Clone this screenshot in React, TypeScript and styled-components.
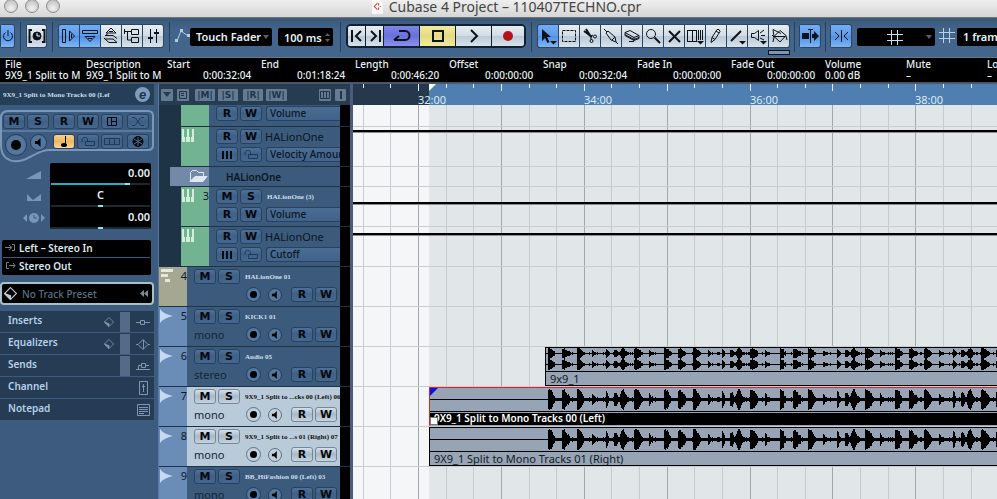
import React from "react";
import styled, { createGlobalStyle, css } from "styled-components";

const UI = `"Noto Sans", "Open Sans", sans-serif`;

const GlobalStyle = createGlobalStyle`
  * { box-sizing: border-box; }
  html, body { margin: 0; padding: 0; }
  body { font-family: ${UI}; font-size: 11px; line-height: 14px; background: #3c5b7d; overflow: hidden; }
  button, input, select { font: inherit; color: inherit; margin: 0; padding: 0; border: 0; background: none; border-radius: 0; }
  select { appearance: none; }
  svg { display: block; flex: none; }
  h1, h2, dl, dt, dd, ul { margin: 0; padding: 0; font: inherit; list-style: none; }
`;

const Window = styled.div`
  display: flex;
  flex-direction: column;
  height: 100vh;
  overflow: hidden;
`;

/* ---------- title bar ---------- */

const TitleBar = styled.header`
  position: relative;
  flex: none;
  height: 18px;
  display: flex;
  align-items: flex-start;
  justify-content: center;
  gap: 6px;
  padding-left: 16px;
  background: linear-gradient(#efefef, #d6d6d6);
  border-bottom: 1px solid #6e747c;
  color: #444;
  font-size: 14px;
  overflow: hidden;
`;
const Lights = styled.div`
  position: absolute;
  left: 4px;
  top: -1px;
  display: flex;
  gap: 7px;
`;
const Light = styled.button`
  width: 14px;
  height: 14px;
  border-radius: 50%;
  border: 1px solid #8d8d8d;
  background: radial-gradient(circle at 50% 70%, #f2f2f2, #b5b5b5);
`;

/* ---------- toolbar ---------- */

const Toolbar = styled.nav`
  flex: none;
  height: 39px;
  display: flex;
  align-items: flex-start;
  padding-top: 6px;
  background: linear-gradient(#3a5875, #43658b 30%, #43658b);
  overflow: hidden;
`;
const Divider = styled.i<{ $m?: number }>`
  flex: none;
  width: 1px;
  height: 30px;
  margin: -2px ${(p) => p.$m ?? 5}px 0;
  background: #24405c;
`;
const lightFace = css`background: linear-gradient(#e6edf2, #d3dde6 48%, #bccad7 52%, #d8e2ea);`;
const blueFace = css`background: linear-gradient(#74acf2, #5f9cec 48%, #5290e4 52%, #7db6f7);`;
const ToolGroup = styled.div<{ $dark?: boolean }>`
  flex: none;
  display: flex;
  gap: 1px;
  height: 24px;
  padding: ${(p) => (p.$dark ? 2 : 1)}px;
  border-radius: ${(p) => (p.$dark ? 5 : 3)}px;
  background: ${(p) => (p.$dark ? "#10202e" : "#2c4660")};
`;
const Tool = styled.button<{ $on?: boolean; $tone?: string; $w?: number }>`
  flex: none;
  display: flex;
  align-items: center;
  justify-content: center;
  width: ${(p) => p.$w ?? 20}px;
  height: 100%;
  color: #0c1218;
  ${(p) => (p.$on ? blueFace : lightFace)}
  ${(p) => p.$tone && `background: ${p.$tone};`}
  &:first-child { border-radius: 2px 0 0 2px; }
  &:last-child { border-radius: 0 2px 2px 0; }
`;
const ToolColumn = styled.div`
  flex: none;
  display: flex;
  flex-direction: column;
  align-items: flex-end;
  gap: 2px;
`;
const ColorChip = styled.button`
  width: 22px;
  height: 5px;
  border: 1px solid #0b141d;
  background: #7f95b0;
`;
const Field = styled.label<{ $w: number; $m?: number }>`
  flex: none;
  display: flex;
  align-items: center;
  width: ${(p) => p.$w}px;
  height: 18px;
  margin: 4px ${(p) => p.$m ?? 0}px 0 0;
  padding: 0 3px 0 6px;
  border-radius: 2px;
  background: #000;
  color: #e6f1f8;
  font-weight: 600;
  font-size: 11px;
  select, input { flex: 1; min-width: 0; width: 100%; height: 18px; }
`;
const FieldValue = styled.span`
  flex: 1;
  display: flex;
  justify-content: center;
  color: #cfe0ec;
`;
const FieldIcon = styled.span<{ $w: number }>`
  flex: none;
  display: flex;
  justify-content: center;
  width: ${(p) => p.$w}px;
  margin-top: 4px;
  color: #b9cfe2;
`;
const Spring = styled.span<{ $w: number }>`
  flex: none;
  width: ${(p) => p.$w}px;
`;

/* ---------- info line ---------- */

const InfoLine = styled.dl`
  flex: none;
  display: flex;
  height: 27px;
  padding-left: 5px;
  background: #000;
  border-top: 1px solid #6a7885;
  border-bottom: 2px solid #4b5666;
  color: #e6f0f5;
  font-size: 10px;
  font-weight: 500;
  line-height: 11px;
  overflow: hidden;
`;
const InfoCell = styled.div<{ $w: number; $time?: boolean }>`
  flex: none;
  width: ${(p) => p.$w}px;
  padding-top: 1px;
  dt, dd { width: ${(p) => p.$w - 6}px; white-space: nowrap; }
  dd { padding-left: ${(p) => (p.$time ? 36 : 0)}px; overflow: hidden; }
`;

/* ---------- workspace ---------- */

const Workspace = styled.main`
  flex: 1;
  min-height: 0;
  display: grid;
  grid-template-columns: 159px 191px minmax(0, 1fr);
`;

const Inspector = styled.aside`
  display: flex;
  flex-direction: column;
  min-height: 0;
  overflow: hidden;
  padding-right: 4px;
  background: #3c5b7e;
  border-right: 1px solid #5577a0;
`;
const InspectorHead = styled.div`
  display: flex;
  align-items: center;
  justify-content: space-between;
  height: 21px;
  padding: 0 3px;
  background: #263f58;
`;
const SlimName = styled.span<{ $dark?: boolean }>`
  flex: 1;
  min-width: 0;
  overflow: hidden;
  white-space: nowrap;
  font-family: "Liberation Serif", serif;
  font-weight: 700;
  font-size: 7px;
  color: ${(p) => (p.$dark ? "#101010" : "#cbdcee")};
`;
const EditBadge = styled.button`
  width: 15px;
  height: 15px;
  margin-right: 1px;
  border-radius: 50%;
  background: #7d9dbf;
  color: #1d344a;
  font: italic 700 13px/13px "Liberation Sans", sans-serif;
`;
const Controls = styled.div`
  position: relative;
  display: flex;
  flex-direction: column;
  gap: 5px;
  height: 58px;
  padding: 9px 0 0 3px;
`;
const ControlsFrame = styled.svg`
  position: absolute;
  left: 0;
  top: 3px;
`;
const ControlRow = styled.div`
  position: relative;
  display: flex;
  align-items: flex-start;
  gap: 4px;
  height: 15px;
`;
const Pair = styled.div`
  display: flex;
  gap: 2px;
`;
const RoundPair = styled.div`
  display: flex;
  align-items: flex-start;
  gap: 3px;
  width: 46px;
  padding-left: 2px;
`;

const Btn = styled.button<{ $light?: boolean; $lit?: boolean; $dim?: boolean }>`
  flex: none;
  display: flex;
  align-items: center;
  justify-content: center;
  width: 22px;
  height: 15px;
  border: 1px solid ${(p) => (p.$light ? "#75889b" : "#27415e")};
  border-radius: 3px;
  background: ${(p) =>
    p.$lit
      ? "linear-gradient(#f7cf8c, #eab765 50%, #f9d798)"
      : p.$light
        ? "linear-gradient(#d5e0ea, #a9b9c8 48%, #c7d4df)"
        : "linear-gradient(#4f7197, #3f6086 48%, #456890)"};
  color: ${(p) => (p.$dim ? "#213a54" : "#05080c")};
  font: 700 11px/13px "DejaVu Sans", sans-serif;
`;
const Round = styled.button<{ $d: number; $light?: boolean }>`
  flex: none;
  display: flex;
  align-items: center;
  justify-content: center;
  width: ${(p) => p.$d}px;
  height: ${(p) => p.$d}px;
  border-radius: 50%;
  border: 1px solid ${(p) => (p.$light ? "#5d7185" : "#223c57")};
  background: ${(p) => (p.$light ? "#c3d0dc" : "#55779d")};
  color: #000;
`;

const Levels = styled.div`
  display: grid;
  grid-template-columns: 50px 101px;
  height: 66px;
  margin-bottom: 11px;
`;
const LevelIcons = styled.div`
  display: flex;
  flex-direction: column;
  align-items: center;
  gap: 10px;
  padding: 5px 0 0 18px;
`;
const LevelStack = styled.div`
  background: #000;
  border-radius: 2px;
  padding: 0 1px;
`;
const Level = styled.label<{ $center?: boolean }>`
  display: flex;
  flex-direction: column;
  justify-content: space-between;
  height: 22px;
  padding-top: 3px;
  color: #e4f0f4;
  font-weight: 600;
  text-align: ${(p) => (p.$center ? "center" : "right")};
`;
const Slider = styled.input<{ $fill?: boolean }>`
  appearance: none;
  display: block;
  width: 100%;
  height: 2px;
  background: ${(p) => (p.$fill ? "linear-gradient(90deg, #1fb0c4 78%, #1b2a30 78%)" : "#1b2a30")};
  &::-webkit-slider-thumb { appearance: none; width: 5px; height: 2px; background: #8be3ea; }
`;

const Routing = styled.div`
  display: flex;
  flex-direction: column;
  height: 35px;
  margin: 0 3px 7px 2px;
  background: #000;
  border-radius: 2px;
`;
const Route = styled.button`
  flex: 1;
  display: flex;
  align-items: center;
  gap: 3px;
  margin: 0 1px;
  padding: 0 0 2px 2px;
  color: #dce8ee;
  font-weight: 600;
  font-size: 10px;
  & + & { border-top: 1px solid #3c5b7e; }
  svg { color: #76848e; }
`;
const Preset = styled.button`
  flex: none;
  display: flex;
  align-items: center;
  gap: 5px;
  height: 23px;
  margin-bottom: 5px;
  padding: 0 4px 0 2px;
  border: 2px solid #a8c0c8;
  border-radius: 4px;
  background: #000;
  color: #5d7080;
  font-size: 10px;
  font-weight: 500;
  span { flex: 1; text-align: left; }
  svg { color: #b9c9d2; }
`;
const Section = styled.button`
  flex: none;
  display: grid;
  grid-template-columns: 1fr 10px 10px 14px;
  align-items: center;
  column-gap: 6px;
  height: 22px;
  width: 100%;
  padding: 0 4px 0 8px;
  border-top: 1px solid #3c5b7e;
  background: #263c54;
  color: #b6d0ea;
  font-weight: 600;
  font-size: 10px;
  text-align: left;
  svg { color: #8097b0; }
  span { padding-bottom: 3px; }
`;
const Bypass = styled.i<{ $show: boolean }>`
  height: 20px;
  background: ${(p) => (p.$show ? "#546a87" : "transparent")};
`;

/* ---------- track list ---------- */

const TrackPanel = styled.section`
  display: flex;
  flex-direction: column;
  min-height: 0;
  overflow: hidden;
  background: #1e3346;
`;
const TrackHead = styled.div`
  flex: none;
  display: flex;
  align-items: center;
  gap: 3px;
  height: 21px;
  padding: 0 4px 0 2px;
  background: #263c50;
`;
const HeadBtn = styled.button<{ $w: number; $gap?: number }>`
  flex: none;
  display: flex;
  align-items: center;
  justify-content: center;
  width: ${(p) => p.$w}px;
  height: 12px;
  margin-right: ${(p) => p.$gap ?? 0}px;
  border-radius: 1px;
  background: #647b92;
  color: #20354a;
  font: 700 9px/12px "DejaVu Sans", sans-serif;
`;
const Track = styled.li<{ $h: number; $first?: boolean }>`
  flex: none;
  display: flex;
  height: ${(p) => p.$h}px;
  border-top: ${(p) => (p.$first ? 0 : 1)}px solid #1e3346;
`;
const TrackRows = styled.ul`
  flex: 1;
  min-height: 0;
  display: flex;
  flex-direction: column;
  overflow: hidden;
`;
const Tab = styled.div<{ $indent?: number; $w?: number; $c: string }>`
  flex: none;
  display: flex;
  justify-content: space-between;
  width: ${(p) => p.$w ?? 28}px;
  margin-left: ${(p) => p.$indent ?? 0}px;
  padding: 2px 0 0 1px;
  background: ${(p) => p.$c};
  color: #0b1a24;
`;
const TrackBody = styled.div<{ $sel?: boolean; $first?: boolean }>`
  flex: 1;
  min-width: 0;
  display: flex;
  flex-direction: column;
  gap: 3px;
  padding: ${(p) => (p.$first ? 1 : 2)}px 0 0 7px;
  overflow: hidden;
  background: ${(p) => (p.$sel ? "#b9cad9" : "#3c5b7c")};
`;
const Line = styled.div`
  flex: none;
  display: flex;
  align-items: center;
  gap: 2px;
  height: 15px;
`;
const Meter = styled.i`
  flex: none;
  width: 10px;
  background: #000;
`;
const Name = styled.span<{ $strong?: boolean }>`
  padding-left: 1px;
  color: #0a1622;
  white-space: nowrap;
  font-size: ${(p) => (p.$strong ? 10 : 11)}px;
  font-weight: ${(p) => (p.$strong ? 600 : 400)};
`;
const Param = styled.select`
  flex: 1;
  min-width: 0;
  height: 15px;
  margin-left: 2px;
  padding-left: 3px;
  border: 1px solid #27415e;
  border-right: 0;
  border-radius: 3px 0 0 3px;
  background: linear-gradient(#4a6d93, #41628a);
  color: #0b1724;
  font-size: 10px;
  font-weight: 500;
  line-height: 13px;
`;
const Channels = styled.span`
  width: 50px;
  color: #142537;
`;
const Gap = styled.i<{ $w: number }>`
  flex: none;
  width: ${(p) => p.$w}px;
`;

/* ---------- arrangement ---------- */

const Arrange = styled.section`
  display: flex;
  flex-direction: column;
  min-width: 0;
  min-height: 0;
  overflow: hidden;
  border-left: 3px solid #4c5a7d;
  background: linear-gradient(90deg, #f4f6f8 76px, #e1e7e8 76px);
`;
const Ruler = styled.svg`
  width: 100%;
  height: 21px;
`;
const Lanes = styled.div`
  position: relative;
  flex: 1;
  min-height: 0;
  overflow: hidden;
`;
const GridLines = styled.svg`
  position: absolute;
  inset: 0;
  width: 100%;
  height: 100%;
`;
const Lane = styled.div<{ $h: number; $first?: boolean; $pad?: number }>`
  position: relative;
  height: ${(p) => p.$h}px;
  padding-top: ${(p) => p.$pad ?? 0}px;
  border-top: ${(p) => (p.$first ? 0 : 1)}px solid #c8cdd0;
`;
const Automation = styled.i`
  display: block;
  height: 3px;
  background: #000;
  border-bottom: 1px solid #8a8d8e;
`;
const Clip = styled.article<{ $left: number; $edge?: string }>`
  position: relative;
  display: flex;
  flex-direction: column;
  height: 39px;
  margin-left: ${(p) => p.$left}px;
  border-top: 1px solid ${(p) => p.$edge ?? "#000"};
  border-left: 1px solid ${(p) => p.$edge ?? "#000"};
  border-bottom: 1px solid ${(p) => (p.$edge ? "#96a4b5" : "#000")};
  background: #96a4b5;
  overflow: hidden;
`;
const Wave = styled.svg`
  width: 100%;
  height: 23px;
`;
const ClipLabel = styled.div<{ $active?: boolean }>`
  flex: 1;
  padding-left: 4px;
  border-top: 1px solid #000;
  background: ${(p) => (p.$active ? "#000" : "transparent")};
  box-shadow: ${(p) => (p.$active ? "inset 0 1px #96a4b5" : "none")};
  color: ${(p) => (p.$active ? "#fff" : "#111a22")};
  font-weight: ${(p) => (p.$active ? 600 : 400)};
  font-size: ${(p) => (p.$active ? 10 : 11)}px;
  line-height: 13px;
  white-space: nowrap;
`;
const FadeCorner = styled.svg`
  position: absolute;
  left: 0;
  top: 0;
`;
const Handle = styled.i`
  position: absolute;
  left: 0;
  bottom: 0;
  width: 8px;
  height: 8px;
  background: #fff;
  border: 1px solid #777;
`;

/* ---------- icons ---------- */

const Glyph = ({ d, w = 18, h = 18, fill = "none", sw = 1, children }: {
  d?: string; w?: number; h?: number; fill?: string; sw?: number; children?: React.ReactNode;
}) => (
  <svg width={w} height={h} viewBox={`0 0 ${w} ${h}`} fill={fill} stroke="currentColor" strokeWidth={sw} aria-hidden="true">
    {d && <path d={d} />}
    {children}
  </svg>
);
const Corner = () => <path d="M11 14h7l-3.5 3.5z" fill="currentColor" stroke="none" />;

const Lock = () => <Glyph w={16} h={11} d="M5.5 5.5h9v4h-9zM7.5 5V3.5C7.5 0.5 2 0.5 2 4v2" />;
const Speaker = ({ s = 9 }: { s?: number }) => (
  <svg width={s} height={s} viewBox="0 0 9 9" aria-hidden="true"><path d="M1 3h2.5L6.500 0v9L3.500 6H1z" /></svg>
);
const Dot = ({ s }: { s: number }) => (
  <svg width={s} height={s} viewBox="0 0 10 10" aria-hidden="true"><circle cx="5" cy="5" r="5" /></svg>
);
const Bars = () => <Glyph w={10} h={8} sw={2} d="M1 0v8M5 0v8M9 0v8" />;
const Keys = () => (
  <svg width="12" height="14" viewBox="0 0 12 14" fill="#d3efdc" aria-hidden="true">
    <path d="M0 0h2v8h1v5H0zM5 0h2v8h1v5H4V8h1zM10 0h2v13H9V8h1z" />
  </svg>
);
const WaveTab = () => (
  <svg width="13" height="14" viewBox="0 0 13 14" fill="#c5daf0" aria-hidden="true"><path d="M0 0C3 4 8 6 13 7 8 8 3 10 0 14z" /></svg>
);
const MidiTab = () => (
  <svg width="14" height="14" viewBox="0 0 14 14" fill="#e6e8d8" aria-hidden="true"><path d="M1 0h12v3H1zM1 5h7v3H1zM5 10h5v3H5z" /></svg>
);
const Diamond = ({ s = 10 }: { s?: number }) => (
  <svg width={s} height={s} viewBox="0 0 12 12" fill="none" stroke="currentColor" aria-hidden="true">
    <path d="M6 0.500L11.500 6 6 11.500 0.500 6z" /><path d="M0.500 6L6 8v3.500z" fill="currentColor" />
  </svg>
);
const Hash = () => <Glyph w={16} h={15} d="M4.5 0v15M10.5 0v15M0 4.500h16M0 10.500h16" />;
const Caret = () => <svg width="6" height="4" viewBox="0 0 6 4" fill="#56616b" aria-hidden="true"><path d="M0 0h6L3 4z" /></svg>;

const tools: [string, React.ReactNode][] = [
  ["Object selection", <Glyph key="a"><path d="M3 2v12l3-3 2.500 5 2-1L8 10h4z" fill="currentColor" stroke="none" /><Corner /></Glyph>],
  ["Range selection", <Glyph key="b"><rect x="2.500" y="3.500" width="13" height="11" strokeDasharray="3 1" /></Glyph>],
  ["Split", <Glyph key="c"><path d="M3 4l8 6M5 2l5 8" strokeWidth="2" /><path d="M10 9l2-1" /><circle cx="14" cy="9.500" r="1.500" /><circle cx="10.500" cy="14" r="1.500" /><path d="M10 10v3" /></Glyph>],
  ["Glue", <Glyph key="d" d="M2 2l3 3M4 6l2-2 7 6 1 5-5-2-5-7M6 4l-2 2M10 13l3-3M14 15l2 2" />],
  ["Erase", <Glyph key="e" d="M2 5.5l5-2 9 5-5 2zM2 5.500v3l9 5v-3M11 13.500l5-2v-3M2 7.500l9 5 5-2M6 14.500h5" />],
  ["Zoom", <Glyph key="f"><circle cx="7" cy="7" r="4.500" /><path d="M10.500 10.500L16 16" strokeWidth="2" /></Glyph>],
  ["Mute", <Glyph key="g" sw={2} d="M4 4l11 11M15 4L4 15" />],
  ["Time warp", <Glyph key="h"><path d="M1.500 3v12M6.500 3v12M10.500 3v12M12.500 3v10M14.500 3v10M16.500 3v10M1 3.500h10M1 14.500h9" /><Corner /></Glyph>],
  ["Draw", <Glyph key="i" d="M4 15.500l1-5 5-8h2l1 2-5 8zM5 10.500l3 2M9 4l3 2" />],
  ["Line", <Glyph key="j"><path d="M3 14L13 4" strokeWidth="2" /><Corner /></Glyph>],
  ["Play", <Glyph key="k"><path d="M2.5 6.500h3l4-3v10l-4-3h-3zM11 6l4-3M12 8.500h4M11 11l4 2" /><Corner /></Glyph>],
  ["Color", <Glyph key="l" d="M4 9.5l6-6 6 5-6 6.500zM4 9.500h11M3 2.500l8 4M3 2.500l1 7M2 8l2 2-1 5M16 9l1 4" />],
];

const infoCells: [string, string, number, boolean][] = [
  ["File", "9X9_1 Split to Mono", 81, false],
  ["Description", "9X9_1 Split to Mono", 81, false],
  ["Start", "0:00:32:04", 94, true],
  ["End", "0:01:18:24", 94, true],
  ["Length", "0:00:46:20", 94, true],
  ["Offset", "0:00:00:00", 94, true],
  ["Snap", "0:00:32:04", 94, true],
  ["Fade In", "0:00:00:00", 94, true],
  ["Fade Out", "0:00:00:00", 94, true],
  ["Volume", "0.00 dB", 81, false],
  ["Mute", "–", 81, false],
  ["Lock", "–", 81, false],
];

/* ---------- waveform ---------- */

const CLIP_END = 3000;
const FIRST_HIT = 195;
const HITS: { at: number; env: number[] }[] = [
  { at: 0, env: [10, 10, 9, 9, 8, 4, 4, 2, 1] },
  { at: 14, env: [9, 9, 10, 8, 7, 5, 5, 4, 2, 1] },
  { at: 29, env: [10, 10, 10, 9, 7, 6, 4, 2, 1] },
  { at: 44, env: [6, 5, 3, 2, 2, 1] },
  { at: 58, env: [9, 7, 4, 2, 1, 1] },
  { at: 66, env: [7, 7, 7, 5, 3, 3] },
  { at: 72, env: [6, 9, 10, 10, 8, 6, 4, 3, 2, 1, 2, 1, 2] },
  { at: 86, env: [10, 10, 10, 9, 9, 7, 6, 4, 2, 1] },
  { at: 101, env: [7, 5, 3, 3, 2, 1] },
];
const noise = (n: number) => {
  const s = Math.sin(n * 127.1) * 43758.5453;
  return s - Math.floor(s);
};
const wavePath = (clipLeft: number, mid: number, peak: number) => {
  let d = "";
  const start = FIRST_HIT - clipLeft;
  for (let x = start; x < CLIP_END; x++) {
    const t = x - start;
    const local = t - Math.round(Math.floor(t / 115.6) * 115.6);
    let amp = noise(t) > 0.8 ? 1.5 : 0.6;
    for (const { at, env } of HITS) {
      const v = env[local - at];
      if (v) amp = Math.max(amp, v - 1.4 * noise(t + 7));
    }
    const a = Math.max(0, Math.round((amp * peak) / 10));
    if (a) d += `M${x} ${mid - a - 1}h1v${a * 2 + 1}h-1z`;
  }
  return d;
};

const WaveLine = ({ left, rows, peak }: { left: number; rows: number[]; peak: number }) => (
  <Wave aria-hidden="true">
    {rows.map((m) => (
      <g key={m}>
        <rect x="0" y={m - 1} width="100%" height="1" />
        <path d={wavePath(left, m, peak)} />
      </g>
    ))}
  </Wave>
);

/* ---------- pieces ---------- */

const ReadWrite = ({ light }: { light?: boolean }) => (
  <>
    <Btn $light={light} aria-label="Read automation">R</Btn>
    <Btn $light={light} aria-label="Write automation">W</Btn>
  </>
);
const MuteSolo = ({ light }: { light?: boolean }) => (
  <>
    <Btn $light={light} aria-label="Mute">M</Btn>
    <Btn $light={light} aria-label="Solo">S</Btn>
  </>
);
const ParamSelect = ({ value }: { value: string }) => (
  <Param aria-label="Automation parameter" defaultValue={value}><option>{value}</option></Param>
);
const GREEN = "#72b492";

const LinkedTrack = ({ param }: { param: string }) => (
  <Track $h={40}>
    <Tab $indent={22} $c={GREEN}><Keys /></Tab>
    <TrackBody>
      <Line><ReadWrite /><Name>HALionOne</Name></Line>
      <Line>
        <Btn aria-label="Lanes"><Bars /></Btn>
        <Btn $dim aria-label="Lock"><Lock /></Btn>
        <ParamSelect value={param} />
      </Line>
    </TrackBody>
    <Meter />
  </Track>
);

const AudioTrack = ({ n, name, kind, selected, midi }: {
  n: number; name: string; kind?: string; selected?: boolean; midi?: boolean;
}) => (
  <Track $h={40}>
    <Tab $c={midi ? "#a5a793" : "#6a8db8"}>{midi ? <MidiTab /> : <WaveTab />}<span>{n}</span></Tab>
    <TrackBody $sel={selected}>
      <Line><MuteSolo light={selected} /><Gap $w={1} /><SlimName $dark={selected}>{name}</SlimName></Line>
      <Line>
        <Channels>{kind}</Channels>
        <Round $d={15} $light={selected} aria-label="Record enable"><Dot s={7} /></Round>
        <Gap $w={3} />
        <Round $d={14} $light={selected} aria-label="Monitor"><Speaker s={8} /></Round>
        <Gap $w={5} />
        <ReadWrite light={selected} />
      </Line>
    </TrackBody>
    <Meter />
  </Track>
);

const sections: [string, boolean, boolean, React.ReactNode][] = [
  ["Inserts", true, true, <Glyph key="1" w={14} h={12} d="M0 6.5h4M9 6.500h5M4.500 4.500h4v4h-4z" />],
  ["Equalizers", true, true, <Glyph key="2" w={14} h={12} d="M0 6.5h2M12 6.500h2M7 1.500l5 5-5 5-5-5zM7.500 2v9" />],
  ["Sends", false, true, <Glyph key="3" w={14} h={12} d="M0 9.5h14M2.500 9V5.500h3M5.500 3.500h4v4h-4zM10 5.500h3" />],
  ["Channel", false, false, <Glyph key="4" w={14} h={14} d="M3.5 0.500h8v13h-8zM7.500 3v8M6 5.500h3" />],
  ["Notepad", false, false, <Glyph key="5" w={14} h={14} d="M1.5 1.500h12v11h-12zM3 4.500h9M3 6.500h9M3 8.500h9M3 10.500h5" />],
];

const ticks = Array.from({ length: 140 }, (_, i) => ({
  x: Math.round(65 + (i - 2) * 27.63),
  major: (i - 2) % 3 === 0,
  label: (i - 2) % 6 === 0 && i >= 2 ? `${32 + ((i - 2) / 6) * 2}:00` : "",
}));

export default function App() {
  return (
    <>
      <GlobalStyle />
      <Window>
        <TitleBar>
          <Lights><Light aria-label="Close" /><Light aria-label="Minimize" /><Light aria-label="Zoom" /></Lights>
          <svg width="11" height="14" viewBox="0 0 10 13" aria-hidden="true">
            <path d="M0 0h7l3 3v10H0z" fill="#fafafa" /><path d="M5 3L2 6l3 3M6 3v2M6 7v2M7 6h1" stroke="#d4453f" fill="none" />
          </svg>
          <h1>Cubase 4 Project – 110407TECHNO.cpr</h1>
        </TitleBar>

        <Toolbar aria-label="Project toolbar">
          <ToolGroup>
            <Tool $on $w={13} aria-label="Activate project">
              <Glyph w={12} h={16} sw={1} d="M6 2v6M3.5 4.500a4.500 4.500 0 1 0 5 0" />
            </Tool>
          </ToolGroup>
          <Divider />
          <ToolGroup>
            <Tool $w={19} aria-label="Delay compensation">
              <Glyph w={18} h={16} sw={1}>
                <path d="M4 2H1.5v12H4M14 2h2.500v12H14" strokeWidth="2" />
                <circle cx="9" cy="8" r="4" fill="currentColor" /><path d="M9 5v3h3" stroke="#fff" />
              </Glyph>
            </Tool>
          </ToolGroup>
          <Divider />
          <ToolGroup>
            <Tool $on aria-label="Show inspector"><Glyph d="M2.5 2.500h3v13h-3zM9.500 4v10l5-5zM11.500 7v4" /></Tool>
            <Tool $on aria-label="Show infoline"><Glyph d="M1.5 3.500h15v3h-15zM4 9.500h10l-5 5zM7 11.500h4" /></Tool>
            <Tool aria-label="Show overview"><Glyph d="M9 1l5 5H4zM7 4.500h4M3 9l3-2.500M4 8.500h7l4 3M3 12h8l4 3.500H7zM3 12l-1-1" /></Tool>
            <Tool aria-label="Open pool"><Glyph d="M1 4.500h3M1.500 2v5M4.500 4v9h4M4 4.500h4M8.500 2.500h7v5h-7zM8.500 10.500h7v5h-7z" /></Tool>
            <Tool aria-label="Open mixer"><Glyph><path d="M6.5 2v14M12.500 2v14" /><path d="M4 11h5M10 6h5" strokeWidth="2" /></Glyph></Tool>
          </ToolGroup>
          <Divider />
          <FieldIcon $w={15}>
            <svg width="15" height="15" viewBox="0 0 15 15" fill="none" stroke="#b5cade" aria-hidden="true">
              <path d="M2 13L6 3l7 5" strokeWidth="1" /><path d="M0 11h3v3H0zM5 1h3v3H5zM12 6h3v3h-3z" fill="#b5cade" stroke="none" />
            </svg>
          </FieldIcon>
          <Field $w={82} $m={6}>
            <select aria-label="Automation mode"><option>Touch Fader</option></select><Caret />
          </Field>
          <Field $w={55} $m={2}>
            <input aria-label="Automation return time" defaultValue="100 ms" />
            <svg width="5" height="11" viewBox="0 0 5 11" fill="#56616b" aria-hidden="true"><path d="M0 4l2.5-3L5 4zM0 7l2.500 3L5 7z" /></svg>
          </Field>
          <Divider />
          <ToolGroup $dark>
            <Tool $w={17} aria-label="To start"><Glyph w={14} sw={2} d="M2 3v12M11 4L6 9l5 5" /></Tool>
            <Tool $w={17} aria-label="To end"><Glyph w={14} sw={2} d="M3 4l5 5-5 5M12 3v12" /></Tool>
            <Tool $w={35} $tone="linear-gradient(#7f84e6, #6a70dc 50%, #8a90ee)" aria-label="Cycle">
              <Glyph w={20} sw={2} d="M7 4h6c6 0 6 9 0 9H2M2 13l5-4" />
            </Tool>
            <Tool $w={35} $tone="linear-gradient(#f1ea9f, #e3db81 50%, #f1eaa0)" aria-label="Stop">
              <Glyph w={14} sw={2} d="M2 4h10v10H2z" />
            </Tool>
            <Tool $w={35} aria-label="Play"><Glyph w={14} sw={2} d="M4 3l6 6-6 6" /></Tool>
            <Tool $w={32} aria-label="Record">
              <svg width="10" height="10" viewBox="0 0 10 10" aria-hidden="true"><circle cx="5" cy="5" r="5" fill="#b5121c" /></svg>
            </Tool>
          </ToolGroup>
          <Divider />
          <ToolColumn>
            <ToolGroup>
              {tools.map(([label, icon], i) => <Tool key={label} $on={i === 0} aria-label={label}>{icon}</Tool>)}
            </ToolGroup>
            <ColorChip aria-label="Event color" />
          </ToolColumn>
          <Divider $m={4} />
          <ToolGroup>
            <Tool $on aria-label="Autoscroll">
              <Glyph d="M9.5 2v14M7 2.500h5"><path d="M1 6h7v6H1zM11 7h2V4l5 5-5 5v-3h-2z" fill="currentColor" stroke="none" /></Glyph>
            </Tool>
          </ToolGroup>
          <Divider $m={4} />
          <ToolGroup>
            <Tool $on aria-label="Snap"><Glyph d="M3 5l4 4-4 4M9.5 3v12M16 5l-4 4 4 4" /></Tool>
          </ToolGroup>
          <Spring $w={5} />
          <Field $w={78} $m={2}>
            <FieldValue><Hash /></FieldValue>
            <Caret />
          </Field>
          <FieldIcon $w={20}><Hash /></FieldIcon>
          <Field $w={82}>
            <select aria-label="Grid type"><option>1 frame</option></select>
          </Field>
        </Toolbar>

        <InfoLine>
          {infoCells.map(([label, value, w, time]) => (
            <InfoCell key={label} $w={w} $time={time}><dt>{label}</dt><dd>{value}</dd></InfoCell>
          ))}
        </InfoLine>

        <Workspace>
          <Inspector aria-label="Inspector">
            <InspectorHead>
              <SlimName>9X9_1 Split to Mono Tracks 00 (Lef</SlimName>
              <EditBadge aria-label="Edit channel">e</EditBadge>
            </InspectorHead>
            <Controls>
              <ControlsFrame width="154" height="56" viewBox="0 0 154 56" fill="none" stroke="#7797bb" strokeWidth="2" aria-hidden="true">
                <path d="M8 3h140q5 0 5 5v29q0 5-5 5H50q-8 0-16 5l-8 4q-12 5-20-1-5-4-5-13V10q0-7 7-7z" />
                <path d="M2 23h150" strokeWidth="1" />
              </ControlsFrame>
              <ControlRow>
                <Pair><MuteSolo /></Pair>
                <Pair>
                  <ReadWrite />
                  <Btn aria-label="Edit in panel"><Glyph w={12} h={11} d="M1.5 1.500h9v8h-9zM5.500 2v8M6 5.500h5" /></Btn>
                </Pair>
                <Btn $dim aria-label="Auto fades"><Glyph w={14} h={11} d="M1 1.5h3l6 8h3M1 9.500h3l6-8h3" /></Btn>
              </ControlRow>
              <ControlRow>
                <RoundPair>
                  <Round $d={22} aria-label="Record enable"><Dot s={10} /></Round>
                  <Round $d={17} aria-label="Monitor"><Speaker /></Round>
                </RoundPair>
                <Pair>
                  <Btn $lit aria-label="Time base">
                    <svg width="8" height="11" viewBox="0 0 8 11" aria-hidden="true"><path d="M5 0h1v9H5z" /><ellipse cx="4" cy="9" rx="3" ry="2" /></svg>
                  </Btn>
                  <Btn $dim aria-label="Lock"><Lock /></Btn>
                  <Btn $dim aria-label="Lanes"><Glyph w={16} h={9} d="M0.5 1.500h15v6h-15zM5.500 2v5M10.500 2v5" /></Btn>
                </Pair>
                <Btn aria-label="Freeze">
                  <Glyph w={14} h={13}><circle cx="7" cy="6.5" r="5" fill="currentColor" /><path d="M7 2v9M3 4l8 5M11 4L3 9" stroke="#4a6c92" /></Glyph>
                </Btn>
              </ControlRow>
            </Controls>
            <Levels>
              <LevelIcons>
                <svg width="16" height="12" viewBox="0 0 16 12" fill="#7896b6" aria-hidden="true"><path d="M0 11L15 3v8z" /></svg>
                <svg width="16" height="12" viewBox="0 0 16 12" fill="#7896b6" aria-hidden="true"><path d="M1 4l6 6 8-6v7H1z" /></svg>
                <svg width="22" height="12" viewBox="0 0 22 12" fill="#7896b6" aria-hidden="true">
                  <path d="M4 2v8L0 6zM18 2v8l4-4z" /><circle cx="11" cy="6" r="5" /><path d="M11 3v3h3" stroke="#3c5b7e" fill="none" />
                </svg>
              </LevelIcons>
              <LevelStack>
                <Level>0.00<Slider $fill type="range" defaultValue={79} aria-label="Volume" /></Level>
                <Level $center>C<Slider type="range" defaultValue={50} aria-label="Pan" /></Level>
                <Level>0.00<Slider type="range" defaultValue={50} aria-label="Delay" /></Level>
              </LevelStack>
            </Levels>
            <Routing>
              <Route><Glyph w={11} h={9} d="M0 4.5h6M4 2l3 2.500L4 7M7 1.500h2.500v6H7" />Left – Stereo In</Route>
              <Route><Glyph w={11} h={9} d="M4 1.5H1.500v6H4M4 4.500h6M8 2l2 2.500L8 7" />Stereo Out</Route>
            </Routing>
            <Preset>
              <Diamond s={13} /><span>No Track Preset</span>
              <svg width="8" height="7" viewBox="0 0 8 7" fill="#7b8c99" aria-hidden="true"><path d="M4 0v7L0 3.500zM8 0v7L4 3.500z" /></svg>
            </Preset>
            {sections.map(([label, diamond, bypass, icon]) => (
              <Section key={label}>
                <span>{label}</span>
                {diamond ? <Diamond /> : <i />}
                <Bypass $show={bypass} />
                {icon}
              </Section>
            ))}
          </Inspector>

          <TrackPanel aria-label="Tracks">
            <TrackHead>
              <HeadBtn $w={12} $gap={1} aria-label="Presets"><svg width="8" height="5" viewBox="0 0 8 5" fill="#263c50" aria-hidden="true"><path d="M0 0h8L4 5z" /></svg></HeadBtn>
              <HeadBtn $w={12} $gap={3} aria-label="Track types"><Glyph w={12} h={12} d="M2.5 2.500h7v7h-7zM4 4.500h3M4 6.500h3" /></HeadBtn>
              <HeadBtn $w={20} aria-label="Mute all">|M|</HeadBtn>
              <HeadBtn $w={20} $gap={2} aria-label="Solo off">|S|</HeadBtn>
              <HeadBtn $w={20} aria-label="Read all">|R|</HeadBtn>
              <HeadBtn $w={21} aria-label="Write all">|W|</HeadBtn>
              <Spring $w={26} />
              <HeadBtn $w={12} $gap={1} aria-label="Columns"><Glyph w={12} h={12} d="M1.5 2.500h9v7h-9zM4.500 3v6M7.500 3v6" /></HeadBtn>
              <HeadBtn $w={11} aria-label="Divide list"><Glyph w={2} h={8} sw={2} d="M1 0v8" /></HeadBtn>
            </TrackHead>
            <TrackRows>
              <Track $h={21} $first>
                <Tab $indent={22} $c={GREEN} />
                <TrackBody $first><Line><ReadWrite /><ParamSelect value="Volume" /></Line></TrackBody>
                <Meter />
              </Track>
              <LinkedTrack param="Velocity Amount" />
              <Track $h={20}>
                <Tab $indent={11} $w={39} $c="#7389a8">
                  <i />
                  <svg width="20" height="15" viewBox="0 0 20 15" fill="none" stroke="#dfe8f2" aria-hidden="true">
                    <path d="M1.5 12V3.500l2-2h4l2 2h5v4" /><path d="M1 12.500l5-5h12l-4 5z" fill="#dfe8f2" />
                  </svg>
                </Tab>
                <TrackBody><Line><Gap $w={7} /><Name $strong>HALionOne</Name></Line></TrackBody>
                <Meter />
              </Track>
              <Track $h={40}>
                <Tab $indent={22} $c={GREEN}><Keys /><span>3</span></Tab>
                <TrackBody>
                  <Line><MuteSolo /><Gap $w={1} /><SlimName>HALionOne (3)</SlimName></Line>
                  <Line><ReadWrite /><ParamSelect value="Volume" /></Line>
                </TrackBody>
                <Meter />
              </Track>
              <LinkedTrack param="Cutoff" />
              <AudioTrack n={4} name="HALionOne 01" midi />
              <AudioTrack n={5} name="KICK1 01" kind="mono" />
              <AudioTrack n={6} name="Audio 05" kind="stereo" />
              <AudioTrack n={7} name="9X9_1 Split to ...cks 00 (Left) 06" kind="mono" selected />
              <AudioTrack n={8} name="9X9_1 Split to ...s 01 (Right) 07" kind="mono" selected />
              <AudioTrack n={9} name="BB_HiFashion 00 (Left) 03" kind="mono" />
            </TrackRows>
          </TrackPanel>

          <Arrange aria-label="Arrangement">
            <Ruler aria-label="Timeline">
              <rect width="100%" height="21" fill="#4e7fb0" />
              <rect width="76" height="21" fill="#26394c" />
              <path d="M76 0h7l-7 7z" fill="#fff" />
              {ticks.map((t) => (
                <g key={t.x}>
                  <rect x={t.x} y="0" width="1" height={t.major ? 7 : 4} fill="#e8f0f6" />
                  {t.label && <text x={t.x} y="20" fill="#dcebf6" fontSize="11">{t.label}</text>}
                </g>
              ))}
            </Ruler>
            <Lanes>
              <GridLines aria-hidden="true">
                {ticks.map((t) => (
                  <rect key={t.x} x={t.x} width="1" height="100%" fill={t.major ? "#a3a8aa" : "#c5cbcf"} />
                ))}
              </GridLines>
              <Lane $h={21} $first />
              <Lane $h={40} $pad={3}><Automation /></Lane>
              <Lane $h={20} />
              <Lane $h={40} $pad={15}><Automation /></Lane>
              <Lane $h={40} $pad={6}><Automation /></Lane>
              <Lane $h={40} />
              <Lane $h={40} />
              <Lane $h={40}>
                <Clip $left={192}>
                  <WaveLine left={193} rows={[6, 17]} peak={5} />
                  <ClipLabel>9x9_1</ClipLabel>
                </Clip>
              </Lane>
              <Lane $h={40}>
                <Clip $left={76} $edge="#e0222e">
                  <WaveLine left={77} rows={[12]} peak={10} />
                  <ClipLabel $active>9X9_1 Split to Mono Tracks 00 (Left)</ClipLabel>
                  <FadeCorner width="8" height="8" viewBox="0 0 8 8" fill="#0b12e0" aria-hidden="true"><path d="M0 0h8L0 8z" /></FadeCorner>
                  <Handle />
                </Clip>
              </Lane>
              <Lane $h={40}>
                <Clip $left={76}>
                  <WaveLine left={77} rows={[12]} peak={10} />
                  <ClipLabel>9X9_1 Split to Mono Tracks 01 (Right)</ClipLabel>
                </Clip>
              </Lane>
              <Lane $h={40} />
            </Lanes>
          </Arrange>
        </Workspace>
      </Window>
    </>
  );
}
